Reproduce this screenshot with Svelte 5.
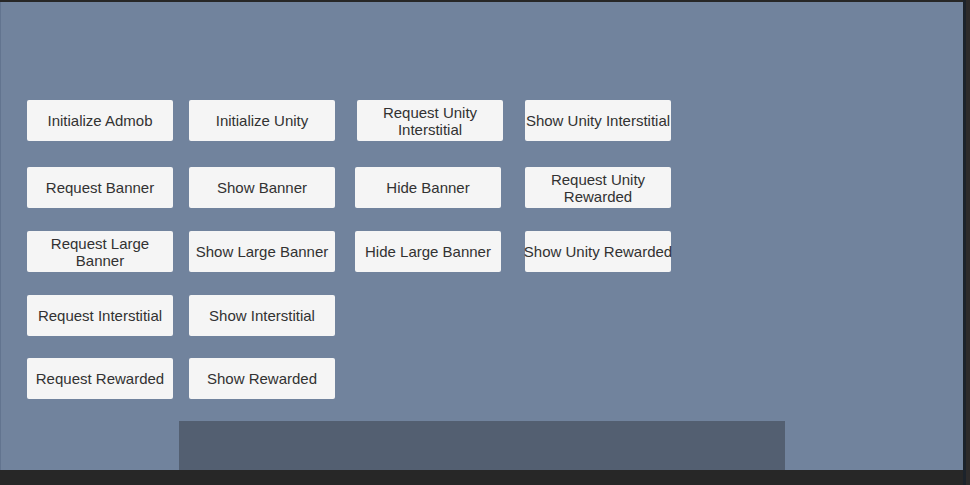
<script>
  const rows = [
    ['Initialize Admob', 'Initialize Unity', 'Request Unity\nInterstitial', 'Show Unity Interstitial'],
    ['Request Banner', 'Show Banner', 'Hide Banner', 'Request Unity\nRewarded'],
    ['Request Large\nBanner', 'Show Large Banner', 'Hide Large Banner', 'Show Unity Rewarded'],
    ['Request Interstitial', 'Show Interstitial'],
    ['Request Rewarded', 'Show Rewarded']
  ];
</script>

<div class="frame">
  <main class="scene">
    <div class="controls">
      {#each rows as row}
        <div class="row">
          {#each row as label}
            <button type="button">{label}</button>
          {/each}
        </div>
      {/each}
    </div>
    <div class="banner"></div>
  </main>
</div>

<style>
  :global(body) {
    margin: 0;
    background: #272727;
  }

  .frame {
    box-sizing: border-box;
    display: flex;
    min-height: 100vh;
    padding: 2px 7px 15px 0;
    background: linear-gradient(to left, #2d2b2b 4px, #1c232b 4px, #1c232b 7px, #272727 7px);
  }

  .scene {
    box-sizing: border-box;
    display: flex;
    flex: 1;
    flex-direction: column;
    justify-content: space-between;
    gap: 22px;
    padding-top: 98px;
    border-left: 1px solid #62748f;
    background: #71839d;
  }

  .controls {
    display: grid;
    grid-template-rows: 67px 64px 64px 63px 41px;
    padding-left: 26px;
  }

  .row {
    display: grid;
    grid-template-columns: 162px 166px 170px 146px;
    align-items: start;
  }

  .row:first-child {
    grid-template-columns: 162px 168px 168px 146px;
  }

  button {
    display: flex;
    align-items: center;
    justify-content: center;
    width: 146px;
    height: 41px;
    padding: 0;
    border: 0;
    border-radius: 2px;
    background: #f5f5f5;
    color: #323232;
    font: 15px/17px "Liberation Sans", Arial, sans-serif;
    text-align: center;
    white-space: pre;
  }

  .banner {
    align-self: center;
    width: 63%;
    height: 49px;
    background: #535f71;
  }
</style>
